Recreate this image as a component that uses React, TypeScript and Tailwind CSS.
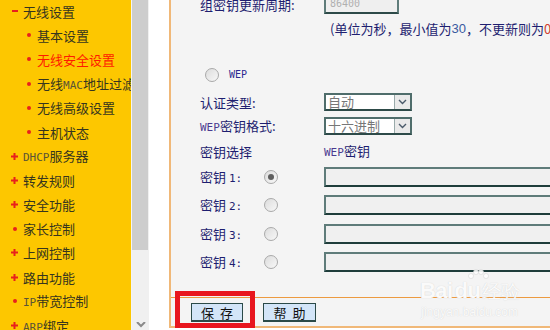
import React from 'react';

type Mark = 'minus' | 'plus' | 'dot' | 'sub';

const menu: { t: string; mark: Mark; active?: boolean }[] = [
  { t: '无线设置', mark: 'minus' },
  { t: '基本设置', mark: 'sub' },
  { t: '无线安全设置', mark: 'sub', active: true },
  { t: '无线MAC地址过滤', mark: 'sub' },
  { t: '无线高级设置', mark: 'sub' },
  { t: '主机状态', mark: 'sub' },
  { t: 'DHCP服务器', mark: 'plus' },
  { t: '转发规则', mark: 'plus' },
  { t: '安全功能', mark: 'plus' },
  { t: '家长控制', mark: 'dot' },
  { t: '上网控制', mark: 'plus' },
  { t: '路由功能', mark: 'plus' },
  { t: 'IP带宽控制', mark: 'dot' },
  { t: 'ARP绑定', mark: 'plus' },
];

// latin bits are drawn in the router's small pixel font
function Mixed({ text, latinClass = '' }: { text: string; latinClass?: string }) {
  const parts = text.split(/([A-Za-z0-9]+)/);
  return (
    <>
      {parts.map((p, i) =>
        /^[A-Za-z0-9]+$/.test(p) ? (
          <span key={i} className={`font-['DejaVu_Sans_Mono',monospace] text-[11px] ${latinClass}`}>
            {p}
          </span>
        ) : (
          <span key={i}>{p}</span>
        )
      )}
    </>
  );
}

function Marker({ mark }: { mark: Mark }) {
  if (mark === 'minus') return <span className="block w-[6px] h-[2px] bg-[#e8201c]" />;
  if (mark === 'plus')
    return (
      <svg width="7" height="7" viewBox="0 0 7 7">
        <rect x="0" y="2.5" width="7" height="2" fill="#e8201c" />
        <rect x="2.5" y="0" width="2" height="7" fill="#e8201c" />
      </svg>
    );
  return <span className="block w-[4px] h-[4px] rounded-full bg-[#e8201c]" />;
}

function Sidebar() {
  return (
    <div className="w-[131px] h-full bg-[#fdc700] overflow-hidden shrink-0">
      <div className="-mt-px flex flex-col">
        {menu.map((m) => (
          <div
            key={m.t}
            className={`h-[24.2px] flex items-center whitespace-nowrap ${m.mark === 'sub' ? 'pl-[27px]' : 'pl-[11px]'}`}
          >
            <span className={`flex items-center justify-center ${m.mark === 'sub' ? 'w-[4px] mr-[6px]' : 'w-[7px] mr-[5px]'}`}>
              <Marker mark={m.mark} />
            </span>
            <span className={`text-[13px] leading-none ${m.active ? 'text-[#ff1a00]' : 'text-[#36351f]'}`}>
              <Mixed text={m.t} latinClass={m.active ? '' : 'text-[#5a5436]'} />
            </span>
          </div>
        ))}
      </div>
    </div>
  );
}

function Scrollbar() {
  return (
    <div className="w-[18px] h-full shrink-0 flex flex-col border-l border-[#f4f4f4] bg-[#f0f0f0]">
      <div className="h-[250px] w-[16px] bg-[#cdcdcd]" />
      <div className="flex-1" />
      <div className="h-[8px] flex justify-center">
        <svg width="10" height="6" viewBox="0 0 10 6">
          <path d="M1 0 L5 4 L9 0" stroke="#8a8a8a" strokeWidth="2" fill="none" />
        </svg>
      </div>
    </div>
  );
}

function Radio({ checked = false }: { checked?: boolean }) {
  return (
    <span className="w-[14px] h-[14px] rounded-full border border-[#a9a9a9] bg-gradient-to-br from-[#dcdcdc] to-[#f8f8f8] flex items-center justify-center">
      {checked && <span className="w-[6px] h-[6px] rounded-full bg-[#5e5e5e]" />}
    </span>
  );
}

function Select({ value }: { value: string }) {
  return (
    <div className="w-[88px] h-[18px] flex border-2 border-[#4f6d6b] border-b-[#2d4a48] bg-white">
      <span className="flex-1 pl-[2px] text-[13px] leading-[14px] text-[#777]">{value}</span>
      <span className="w-[16px] border-l border-[#9aa] bg-[#eaeaea] flex items-center justify-center">
        <svg width="9" height="6" viewBox="0 0 9 6">
          <path d="M1 1 L4.5 4.5 L8 1" stroke="#4a5a6a" strokeWidth="1.4" fill="none" />
        </svg>
      </span>
    </div>
  );
}

function KeyInput() {
  return <div className="flex-1 h-[20px] bg-[#f0f0f0] border-2 border-[#5f7c7a] border-b-[#1f3d3b] border-r-0" />;
}

const label = 'w-[124px] shrink-0 text-[13px] leading-none text-[#1e1e70]';

function Content() {
  const keys = [
    { n: '1', mt: 'mt-[6px]', checked: true },
    { n: '2', mt: 'mt-[8px]' },
    { n: '3', mt: 'mt-[9px]' },
    { n: '4', mt: 'mt-[8px]' },
  ];
  return (
    <div className="flex-1 h-[328px] border-l-2 border-b-2 border-[#f0b878] bg-[#f4f4f4] flex flex-col">
      <div className="h-[297px] overflow-hidden pl-[29px]">
        <div className="-mt-[6px] flex flex-col">
          <div className="h-[20px] flex items-center">
            <span className={label}>组密钥更新周期:</span>
            <div className="w-[75px] h-[20px] border-2 border-[#5f7c7a] border-b-[#2d4a48] bg-[#efefef] flex items-center pl-[4px]">
              <span className="font-['DejaVu_Sans_Mono',monospace] text-[10px] text-[#b0b0b0] leading-none">86400</span>
            </div>
          </div>
          <div className="mt-[6px] h-[16px] flex items-center pl-[130px] whitespace-nowrap text-[13px] leading-none text-[#1e1e70]">
            (单位为秒，最小值为<span className="font-['Liberation_Sans',sans-serif] text-[13px] text-[#3a5aa0] leading-none">30</span>，不更新则为<span className="text-[#d04030]">0</span>)
          </div>
          <div className="mt-[29px] h-[20px] flex items-center pl-[5px]">
            <Radio />
            <span className="ml-[10px] font-['DejaVu_Sans_Mono',monospace] text-[10px] text-[#2a2a90] leading-none">WEP</span>
          </div>
          <div className="mt-[8px] h-[18px] flex items-center">
            <span className={label}>认证类型:</span>
            <Select value="自动" />
          </div>
          <div className="mt-[6px] h-[18px] flex items-center">
            <span className={label}>
              <Mixed text="WEP密钥格式:" latinClass="text-[#4a3a90] text-[10px]" />
            </span>
            <Select value="十六进制" />
          </div>
          <div className="mt-[6px] h-[20px] flex items-center">
            <span className={label}>密钥选择</span>
            <span className="text-[13px] leading-none text-[#1e1e70]">
              <Mixed text="WEP密钥" latinClass="text-[#4a3a90] text-[10px]" />
            </span>
          </div>
          {keys.map((k) => (
            <div key={k.n} className={`${k.mt} h-[20px] flex items-center`}>
              <span className="w-[64px] shrink-0 text-[13px] leading-none text-[#1e1e70] whitespace-nowrap">
                密钥 <span className="font-['DejaVu_Sans_Mono',monospace] text-[11px]">{k.n}:</span>
              </span>
              <span className="w-[60px] shrink-0">
                <Radio checked={k.checked} />
              </span>
              <KeyInput />
            </div>
          ))}
        </div>
      </div>
      <div className="flex-1 border-t border-[#ec9a40] flex items-start gap-[20px] pl-[20px] pt-[5px]">
        <button className="w-[52px] h-[19px] bg-[#d3e5f8] border border-[#2b4a48] border-b-2 text-[13px] leading-none text-[#111] tracking-[6px] pl-[6px]">
          保存
        </button>
        <button className="w-[53px] h-[19px] bg-[#d3e5f8] border border-[#2b4a48] border-b-2 text-[13px] leading-none text-[#111] tracking-[6px] pl-[6px]">
          帮助
        </button>
      </div>
    </div>
  );
}

export default function App() {
  return (
    <div className="relative w-[550px] h-[330px] overflow-hidden bg-white flex font-['Noto_Sans_CJK_SC','Noto_Sans',sans-serif]">
      <Sidebar />
      <Scrollbar />
      <div className="w-[20px] shrink-0 bg-white" />
      <Content />

      {/* red highlight drawn over the save button */}
      <div className="absolute left-[175px] top-[291px] w-[80px] h-[37px] border-[5px] border-[#e8161e]" />

      {/* watermark */}
      <div className="absolute left-[420px] top-[268px] flex flex-col items-center text-white/90 [text-shadow:0_0_1px_#c8c8c8] pointer-events-none">
        <svg width="24" height="16" viewBox="0 0 24 16" className="-mb-[4px] ml-[16px] opacity-90">
          <circle cx="5" cy="8" r="2.5" fill="white" stroke="#d4d4d4" strokeWidth="0.6" />
          <circle cx="10" cy="4" r="2.5" fill="white" stroke="#d4d4d4" strokeWidth="0.6" />
          <circle cx="15" cy="4" r="2.5" fill="white" stroke="#d4d4d4" strokeWidth="0.6" />
          <circle cx="20" cy="8" r="2.5" fill="white" stroke="#d4d4d4" strokeWidth="0.6" />
        </svg>
        <span className="font-['Liberation_Sans',sans-serif] font-bold text-[22px] leading-none tracking-tight">
          Bai<span className="ml-[2px]">du</span>
          <span className="text-[19px] font-normal ml-[2px]">经验</span>
        </span>
        <span className="font-['Liberation_Sans',sans-serif] text-[12px] leading-none mt-[4px]">jingyan.baidu.com</span>
      </div>
    </div>
  );
}
